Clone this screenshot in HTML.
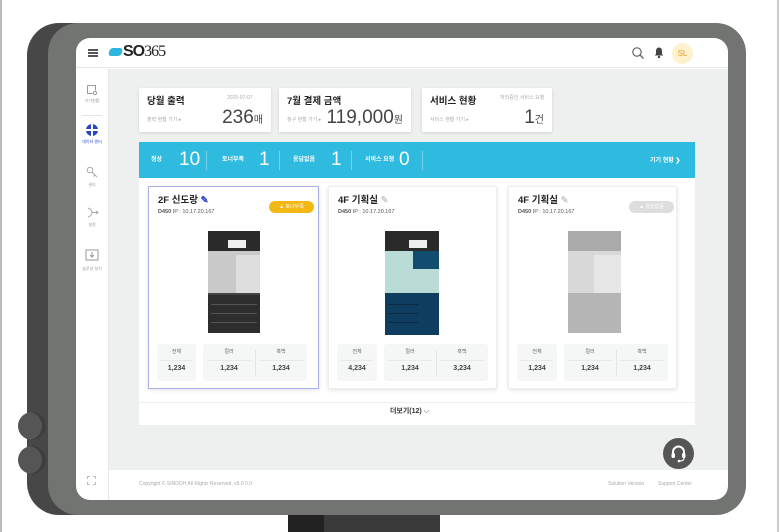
<!DOCTYPE html>
<html><head><meta charset="utf-8"><style>
*{margin:0;padding:0;box-sizing:border-box}
body{width:780px;height:532px;overflow:hidden;background:#fff;position:relative;font-family:"Liberation Sans","Noto Sans CJK KR",sans-serif;color:#333;line-height:1.1}
.a{position:absolute}
.card{background:#fff;box-shadow:0 1px 3px rgba(0,0,0,.12)}
.t{font-weight:bold;font-size:9.5px;color:#222;line-height:11px;white-space:nowrap}
.s{font-size:5px;color:#aaa;white-space:nowrap}
.pc{background:#fff;box-shadow:0 1px 4px rgba(0,0,0,.12);border:1px solid #eee}
.stat{background:#f5f7f6;border-radius:3px}
.sl{font-size:5px;color:#666;text-align:center}
.sv{font-size:7px;font-weight:bold;color:#444;text-align:center}
.side{font-size:4px;color:#999;text-align:center;width:32px}
.big{font-size:19px;color:#444;line-height:1;white-space:nowrap}
</style></head><body>
<div class="a" style="left:0;top:0;width:2px;height:532px;background:#bbb"></div>
<div class="a" style="left:777px;top:0;width:2px;height:532px;background:#ccc"></div>
<div class="a" style="left:288px;top:512px;width:152px;height:20px;background:#3a3a3a"></div>
<div class="a" style="left:288px;top:512px;width:36px;height:20px;background:#222"></div>
<div class="a" style="left:27px;top:23px;width:700px;height:492px;background:#474747;border-radius:32px"></div>
<div class="a" style="left:18px;top:412px;width:28px;height:28px;background:#555;border-radius:50%;box-shadow:inset -4px 0 0 #3e3e3e"></div>
<div class="a" style="left:18px;top:446px;width:28px;height:28px;background:#555;border-radius:50%;box-shadow:inset -4px 0 0 #3e3e3e"></div>
<div class="a" style="left:48px;top:23px;width:698px;height:492px;background:#727472;border-radius:30px"></div>
<div class="a" style="left:76px;top:38px;width:652px;height:462px;background:#fff;border-radius:14px;overflow:hidden">
  <div class="a" style="left:0;top:0;width:652px;height:30px;border-bottom:1px solid #e8e8e8"></div>
  <div class="a" style="left:12px;top:11px;width:10px;height:1.5px;background:#555;box-shadow:0 3px 0 #555,0 6px 0 #555"></div>
  <div class="a" style="left:33px;top:10px;width:13px;height:8px;background:#2fb6dc;border-radius:3px;transform:skewX(-15deg)"></div>
  <div class="a" style="left:47px;top:5px;font-size:16px;font-weight:bold;color:#222;letter-spacing:-1px">SO<span style="font-weight:normal;font-family:'Liberation Serif',serif">365</span></div>
  <svg class="a" style="left:555px;top:8px" width="14" height="14" viewBox="0 0 14 14"><circle cx="6" cy="6" r="4.2" fill="none" stroke="#666" stroke-width="1.2"/><path d="M9 9l3.5 3.5" stroke="#666" stroke-width="1.3"/></svg>
  <svg class="a" style="left:577px;top:8px" width="12" height="13" viewBox="0 0 12 13"><path d="M6 1.5c-2 0-3 1.5-3 3.5v3l-1.2 1.5h8.4L9 8V5c0-2-1-3.5-3-3.5z" fill="#444"/><circle cx="6" cy="11" r="1.2" fill="#444"/></svg>
  <div class="a" style="left:596px;top:5px;width:21px;height:21px;border-radius:50%;background:#fdf1cf;color:#e0a020;font-size:8px;text-align:center;line-height:21px">SL</div>
  <div class="a" style="left:32px;top:30px;width:1px;height:432px;background:#e8e8e8"></div>
  <svg class="a" style="left:10px;top:46px" width="12" height="12" viewBox="0 0 12 12"><path d="M1.5 1.5h8v5M1.5 1.5v8h5" fill="none" stroke="#999"/><circle cx="9" cy="9" r="1.6" fill="none" stroke="#999"/></svg>
  <div class="a side" style="left:0;top:61px">기기현황</div>
  <div class="a" style="left:6px;top:77px;width:20px;height:1px;background:#e5e5e5"></div>
  <div class="a" style="left:10px;top:86px;width:12px;height:12px;border-radius:50%;background:#2746c5"></div>
  <div class="a" style="left:15px;top:86px;width:1.5px;height:12px;background:#fff"></div>
  <div class="a" style="left:10px;top:91px;width:12px;height:1.5px;background:#fff"></div>
  <div class="a side" style="left:0;top:102px;color:#2746c5">데이터 센터</div>
  <svg class="a" style="left:10px;top:128px" width="12" height="13" viewBox="0 0 12 13"><circle cx="4" cy="4" r="2.8" fill="none" stroke="#aaa"/><path d="M6 6l5 5M9 9l-1.5 1.5" stroke="#aaa"/></svg>
  <div class="a side" style="left:0;top:145px">관리</div>
  <svg class="a" style="left:10px;top:168px" width="13" height="13" viewBox="0 0 13 13"><path d="M2 2c3 1 4 3 4 4.5S5 10 2 11M6 6.5h6M10 5l2 1.5-2 1.5" fill="none" stroke="#aaa"/></svg>
  <div class="a side" style="left:0;top:185px">설정</div>
  <svg class="a" style="left:9px;top:211px" width="14" height="13" viewBox="0 0 14 13"><rect x="1" y="1" width="12" height="10" fill="none" stroke="#999"/><path d="M7 3v5M5 6l2 2 2-2" fill="none" stroke="#999"/></svg>
  <div class="a side" style="left:0;top:229px">솔루션 설치</div>
  <svg class="a" style="left:11px;top:438px" width="9" height="9" viewBox="0 0 9 9"><path d="M0.5 3V0.5H3M6 0.5h2.5V3M8.5 6v2.5H6M3 8.5H0.5V6" fill="none" stroke="#aaa" stroke-width=".8"/></svg>
  <div class="a" style="left:33px;top:31px;width:619px;height:401px;background:#eef0ef"></div>
  <div class="a card" style="left:63px;top:50px;width:132px;height:44px">
    <div class="a t" style="left:8px;top:8px">당월 출력</div>
    <div class="a s" style="left:88px;top:8px">2025-07-07 ·</div>
    <div class="a s" style="left:8px;top:30px">출력 현황 가기 ▸</div>
    <div class="a big" style="right:8px;top:20px">236<span style="font-size:10px">매</span></div>
  </div>
  <div class="a card" style="left:203px;top:50px;width:132px;height:44px">
    <div class="a t" style="left:8px;top:8px">7월 결제 금액</div>
    <div class="a s" style="left:8px;top:30px">청구 현황 가기 ▸</div>
    <div class="a big" style="right:8px;top:20px">119,000<span style="font-size:10px">원</span></div>
  </div>
  <div class="a card" style="left:346px;top:50px;width:130px;height:44px">
    <div class="a t" style="left:8px;top:8px">서비스 현황</div>
    <div class="a s" style="left:78px;top:8px">처리중인 서비스 요청</div>
    <div class="a s" style="left:8px;top:30px">서비스 현황 가기 ▸</div>
    <div class="a big" style="right:8px;top:20px">1<span style="font-size:10px">건</span></div>
  </div>
  <div class="a" style="left:63px;top:104px;width:556px;height:36px;background:#2fbadf;color:#fff">
    <div class="a" style="left:12px;top:15px;font-size:6px;font-weight:bold">정상</div>
    <div class="a" style="left:40px;top:8px;font-size:19px;line-height:1">10</div>
    <div class="a" style="left:67px;top:9px;width:1px;height:19px;background:rgba(255,255,255,.35)"></div>
    <div class="a" style="left:83px;top:15px;font-size:6px;font-weight:bold">토너부족</div>
    <div class="a" style="left:120px;top:8px;font-size:19px;line-height:1">1</div>
    <div class="a" style="left:140px;top:9px;width:1px;height:19px;background:rgba(255,255,255,.35)"></div>
    <div class="a" style="left:154px;top:15px;font-size:6px;font-weight:bold">응답없음</div>
    <div class="a" style="left:192px;top:8px;font-size:19px;line-height:1">1</div>
    <div class="a" style="left:212px;top:9px;width:1px;height:19px;background:rgba(255,255,255,.35)"></div>
    <div class="a" style="left:226px;top:15px;font-size:6px;font-weight:bold">서비스 요청</div>
    <div class="a" style="left:260px;top:8px;font-size:19px;line-height:1">0</div>
    <div class="a" style="left:283px;top:9px;width:1px;height:19px;background:rgba(255,255,255,.35)"></div>
    <div class="a" style="left:511px;top:16px;font-size:6px;font-weight:bold">기기 현황 ❯</div>
  </div>
  <div class="a" style="left:63px;top:140px;width:556px;height:247px;background:#fff"></div>
  <div class="a" style="left:63px;top:364px;width:556px;height:1px;background:#eee"></div>
  <div class="a" style="left:0;top:370px;width:652px;text-align:center;font-size:7px;font-weight:bold;color:#333;padding-left:15px">더보기(12) <span style="font-weight:normal">⌵</span></div>

  <div class="a pc" style="left:72px;top:148px;width:171px;height:203px;border:1.5px solid #aab0e8">
    <div class="a t" style="left:9px;top:8px">2F 신도랑 <span style="color:#2746c5">✎</span></div>
    <div class="a" style="left:9px;top:22px;font-size:5.5px;color:#555;white-space:nowrap"><b>D450</b> IP : 10.17.20.167</div>
    <div class="a" style="left:120px;top:14px;width:45px;height:12px;border-radius:6px;background:#f3b816;color:#fff;font-size:5px;line-height:12px;text-align:center">▲ 토너부족</div>
    <div class="a" style="left:59px;top:44px;width:52px;height:20px;background:#2a2a2a"></div>
    <div class="a" style="left:79px;top:53px;width:18px;height:8px;background:#eee"></div>
    <div class="a" style="left:59px;top:64px;width:52px;height:42px;background:#c9c9c9"></div>
    <div class="a" style="left:87px;top:68px;width:24px;height:38px;background:#dedede"></div>
    <div class="a" style="left:59px;top:106px;width:52px;height:40px;background:#2d2d2d;border-top:2px solid #444"></div>
    <div class="a" style="left:62px;top:117px;width:46px;height:1px;background:#555;box-shadow:0 9px 0 #555,0 18px 0 #555"></div>
    <div class="stat a" style="left:8px;top:157px;width:39px;height:37px"><div class="sl" style="margin-top:6px">전체</div><div style="margin:4px 4px;height:1px;background:#e8e8e8"></div><div class="sv">1,234</div></div>
    <div class="stat a" style="left:54px;top:157px;width:104px;height:37px"><div class="a" style="left:52px;top:6px;width:1px;height:26px;background:#e5e5e5"></div><div class="a" style="left:0;top:6px;width:52px"><div class="sl">컬러</div><div style="margin:4px 4px;height:1px;background:#e8e8e8"></div><div class="sv">1,234</div></div><div class="a" style="left:52px;top:6px;width:52px"><div class="sl">흑백</div><div style="margin:4px 4px;height:1px;background:#e8e8e8"></div><div class="sv">1,234</div></div></div>
  </div>
  <div class="a pc" style="left:252px;top:148px;width:169px;height:203px">
    <div class="a t" style="left:9px;top:8px">4F 기획실 <span style="color:#ccc">✎</span></div>
    <div class="a" style="left:9px;top:22px;font-size:5.5px;color:#555;white-space:nowrap"><b>D450</b> IP : 10.17.20.167</div>
    <div class="a" style="left:56px;top:44px;width:54px;height:20px;background:#2a2a2a"></div>
    <div class="a" style="left:80px;top:53px;width:18px;height:8px;background:#eee"></div>
    <div class="a" style="left:56px;top:64px;width:54px;height:42px;background:#b9dcd7"></div>
    <div class="a" style="left:84px;top:64px;width:26px;height:18px;background:#124c6e"></div>
    <div class="a" style="left:56px;top:106px;width:54px;height:42px;background:#0f3d60"></div>
    <div class="a" style="left:59px;top:117px;width:30px;height:1px;background:#0a2a44;box-shadow:0 9px 0 #0a2a44,0 18px 0 #0a2a44"></div>
    <div class="stat a" style="left:8px;top:157px;width:40px;height:37px"><div class="sl" style="margin-top:6px">전체</div><div style="margin:4px 4px;height:1px;background:#e8e8e8"></div><div class="sv">4,234</div></div>
    <div class="stat a" style="left:55px;top:157px;width:104px;height:37px"><div class="a" style="left:52px;top:6px;width:1px;height:26px;background:#e5e5e5"></div><div class="a" style="left:0;top:6px;width:52px"><div class="sl">컬러</div><div style="margin:4px 4px;height:1px;background:#e8e8e8"></div><div class="sv">1,234</div></div><div class="a" style="left:52px;top:6px;width:52px"><div class="sl">흑백</div><div style="margin:4px 4px;height:1px;background:#e8e8e8"></div><div class="sv">3,234</div></div></div>
  </div>
  <div class="a pc" style="left:432px;top:148px;width:169px;height:203px">
    <div class="a t" style="left:9px;top:8px">4F 기획실 <span style="color:#ccc">✎</span></div>
    <div class="a" style="left:9px;top:22px;font-size:5.5px;color:#555;white-space:nowrap"><b>D450</b> IP : 10.17.20.167</div>
    <div class="a" style="left:120px;top:14px;width:45px;height:12px;border-radius:6px;background:#ddd;color:#fff;font-size:5px;line-height:12px;text-align:center">▲ 응답없음</div>
    <div class="a" style="left:59px;top:44px;width:53px;height:20px;background:#aaa"></div>
    <div class="a" style="left:59px;top:64px;width:53px;height:42px;background:#d8d8d8"></div>
    <div class="a" style="left:85px;top:68px;width:27px;height:38px;background:#e6e6e6"></div>
    <div class="a" style="left:59px;top:106px;width:53px;height:40px;background:#b5b5b5"></div>
    <div class="stat a" style="left:8px;top:157px;width:40px;height:37px"><div class="sl" style="margin-top:6px">전체</div><div style="margin:4px 4px;height:1px;background:#e8e8e8"></div><div class="sv">1,234</div></div>
    <div class="stat a" style="left:55px;top:157px;width:104px;height:37px"><div class="a" style="left:52px;top:6px;width:1px;height:26px;background:#e5e5e5"></div><div class="a" style="left:0;top:6px;width:52px"><div class="sl">컬러</div><div style="margin:4px 4px;height:1px;background:#e8e8e8"></div><div class="sv">1,234</div></div><div class="a" style="left:52px;top:6px;width:52px"><div class="sl">흑백</div><div style="margin:4px 4px;height:1px;background:#e8e8e8"></div><div class="sv">1,234</div></div></div>
  </div>
  <div class="a" style="left:587px;top:400px;width:31px;height:31px;border-radius:50%;background:#555"></div>
  <svg class="a" style="left:594px;top:406px" width="17" height="19" viewBox="0 0 17 19"><path d="M3 10V8a5.5 5.5 0 0 1 11 0v2" fill="none" stroke="#fff" stroke-width="2"/><rect x="1.5" y="9" width="3.5" height="5" rx="1.5" fill="#fff"/><rect x="12" y="9" width="3.5" height="5" rx="1.5" fill="#fff"/><path d="M14 14c0 2-2 3-4 3" fill="none" stroke="#fff" stroke-width="1.2"/><circle cx="9" cy="17" r="1.3" fill="#fff"/></svg>
  <div class="a" style="left:63px;top:444px;font-size:5px;color:#aaa">Copyright © SINDOH All Rights Reserved. v5.0.0.0</div>
  <div class="a" style="left:532px;top:444px;font-size:5px;color:#aaa">Solution Version</div>
  <div class="a" style="left:582px;top:444px;font-size:5px;color:#aaa">Support Center</div>
</div>
</body></html>
